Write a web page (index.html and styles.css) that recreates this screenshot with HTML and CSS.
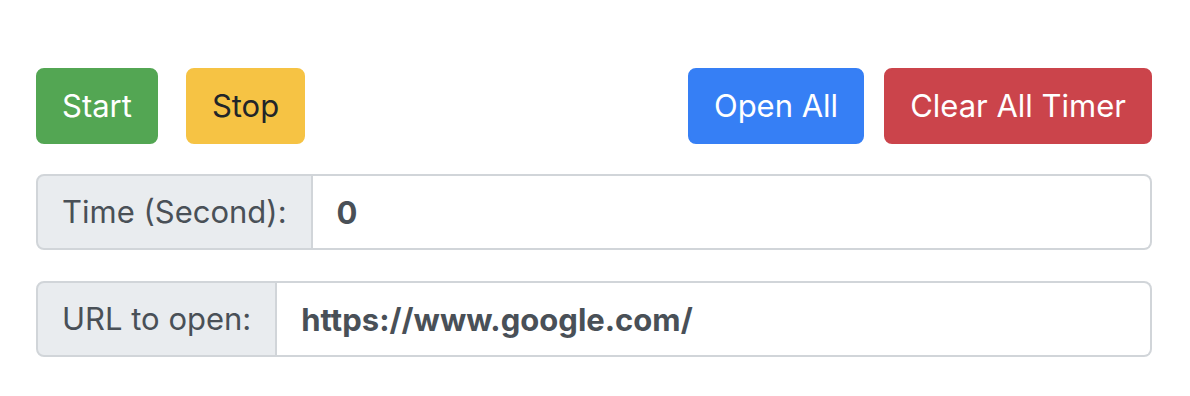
FILE: index.html
```html
<!DOCTYPE html>
<html lang="en">
<head>
<meta charset="utf-8">
<title>Timer</title>
<link rel="stylesheet" href="styles.css">
</head>
<body>
<div class="container">
  <div class="toolbar">
    <div class="group">
      <button class="btn btn-success">Start</button>
      <button class="btn btn-warning">Stop</button>
    </div>
    <div class="group group-right">
      <button class="btn btn-primary">Open All</button>
      <button class="btn btn-danger">Clear All Timer</button>
    </div>
  </div>
  <div class="input-group">
    <span class="addon">Time (Second):</span>
    <input class="field" type="text" value="0">
  </div>
  <div class="input-group">
    <span class="addon">URL to open:</span>
    <input class="field" type="text" value="https://www.google.com/">
  </div>
</div>
</body>
</html>
```
FILE: styles.css
```css
* { box-sizing: border-box; }
html, body {
  margin: 0;
  background: #ffffff;
}
body {
  font-family: Inter, "Noto Sans", "Liberation Sans", sans-serif;
  font-size: 32px;
  line-height: 1.5;
  color: #495057;
}
.container {
  padding: 68px 38px 0 36px;
}
.toolbar {
  display: flex;
  justify-content: space-between;
  margin-bottom: 30px;
}
.group {
  display: flex;
  gap: 28px;
}
.group-right {
  gap: 20px;
}
.btn {
  font-family: inherit;
  font-size: 31px;
  line-height: 48px;
  height: 76px;
  padding: 12px 24px;
  border: 2px solid transparent;
  border-radius: 8px;
  color: #ffffff;
  cursor: pointer;
}
.btn-success { background: #53a653; border-color: #53a653; }
.btn-warning { background: #f6c344; border-color: #f6c344; color: #212529; }
.btn-primary { background: #367ff5; border-color: #367ff5; }
.btn-danger { background: #cb444b; border-color: #cb444b; }
.input-group {
  display: flex;
  height: 76px;
  margin-bottom: 31px;
}
.addon {
  display: flex;
  align-items: center;
  padding: 0 24px;
  font-size: 31px;
  color: #495057;
  background: #e9ecef;
  border: 2px solid #d1d5d9;
  border-radius: 8px 0 0 8px;
  white-space: nowrap;
}
.field {
  flex: 1;
  min-width: 0;
  font-family: inherit;
  font-size: 31px;
  font-weight: 700;
  color: #495057;
  padding: 0 24px;
  border: 2px solid #d1d5d9;
  border-left: none;
  border-radius: 0 8px 8px 0;
  background: #ffffff;
  outline: none;
}
```
